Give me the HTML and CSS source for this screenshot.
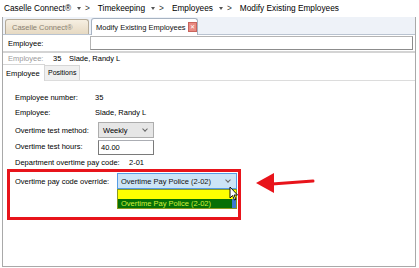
FILE: index.html
```html
<!DOCTYPE html>
<html lang="en">
<head>
    <meta charset="UTF-8">
    <title>Modify Existing Employees</title>
    <link rel="stylesheet" href="styles.css">
</head>
<body>
    <div class="crumbs">
        <span>Caselle Connect®</span><span class="sep"><i class="drop"></i>&gt;</span>
        <span>Timekeeping</span><span class="sep"><i class="drop"></i>&gt;</span>
        <span>Employees</span><span class="sep"><i class="drop"></i>&gt;</span>
        <span>Modify Existing Employees</span>
    </div>
    <div class="frame">
        <div class="tabs">
            <div class="tab">Caselle Connect®</div>
            <div class="tab active">Modify Existing Employees <span class="close">&#10005;</span></div>
        </div>
        <div class="lookup">
            <span class="lookup-label">Employee:</span>
            <div class="lookup-input"></div>
        </div>
        <div class="current">
            <span class="muted">Employee:</span>
            <span class="num">35</span>
            <span>Slade, Randy L</span>
        </div>
        <div class="subtabs">
            <div class="subtab active">Employee</div>
            <div class="subtab">Positions</div>
        </div>
        <div class="form">
            <div class="row"><span class="lbl">Employee number:</span><span>35</span></div>
            <div class="row"><span class="lbl">Employee:</span><span>Slade, Randy L</span></div>
            <div class="row r-method">
                <span class="lbl wide">Overtime test method:</span>
                <div class="select">Weekly<span class="chev"></span></div>
            </div>
            <div class="row r-hours">
                <span class="lbl wide">Overtime test hours:</span>
                <div class="input">40.00</div>
            </div>
            <div class="row r-dept"><span class="lbl dept">Department overtime pay code:</span><span>2-01</span></div>
            <div class="highlight">
                <span class="ovr">Overtime pay code override:</span>
                <div class="select open">Overtime Pay Police (2-02)<span class="chev"></span>
                    <div class="list">
                        <div class="opt blank"></div>
                        <div class="opt picked">Overtime Pay Police (2-02)</div>
                    </div>
                    <svg class="cursor" width="10" height="15" viewBox="0 0 10 15">
                        <path d="M1 1 L1 12 L3.5 9.5 L5.5 14 L7 13.3 L5 9 L8.5 9 Z" fill="#fff" stroke="#000" stroke-width="0.9"/>
                    </svg>
                </div>
            </div>
        </div>
        <svg class="arrow" width="70" height="24" viewBox="0 0 70 24">
            <path d="M16 13 L57 10" stroke="#e8141b" stroke-width="3" stroke-linecap="round"/>
            <path d="M0 12 L18 2 L18 22 Z" fill="#e8141b"/>
        </svg>
    </div>
</body>
</html>
```

FILE: styles.css
```css
* {
    margin: 0;
    padding: 0;
    box-sizing: border-box;
}

body {
    font-family: "Liberation Sans", Arial, sans-serif;
    font-size: 7.5px;
    color: #000;
    background: #fff;
    width: 419px;
    height: 268px;
    overflow: hidden;
}

/* breadcrumb bar */
.crumbs {
    display: flex;
    align-items: center;
    height: 17px;
    padding: 0 0 1px 4px;
    font-size: 8.3px;
    white-space: nowrap;
}

.crumbs .sep {
    display: flex;
    align-items: center;
    gap: 4px;
    margin: 0 8px 0 6px;
    color: #333;
}

.drop {
    width: 0;
    height: 0;
    border-left: 2.5px solid transparent;
    border-right: 2.5px solid transparent;
    border-top: 3px solid #555;
}

.frame {
    position: relative;
    margin: 0 3px 0 2px;
    height: 250px;
    border: 1px solid #a9a9a9;
    border-top: 0;
}

/* document tabs */
.tabs {
    display: flex;
    align-items: flex-end;
    gap: 2px;
    height: 18px;
    padding-left: 2px;
    background: #eef2f8;
    border-bottom: 1px solid #b9c3d0;
}

.tab {
    width: 84px;
    height: 15px;
    padding: 3px 0 0 6px;
    border: 1px solid #b5ab99;
    border-bottom: 0;
    border-radius: 3px 3px 0 0;
    background: linear-gradient(#f6efe2, #e6d9c2);
    color: #8a8272;
    white-space: nowrap;
}

.tab.active {
    display: flex;
    align-items: center;
    width: 107px;
    height: 17px;
    margin-bottom: -1px;
    padding: 0 0 0 4px;
    background: #fff;
    color: #111;
    border-color: #a7b3c2;
}

.close {
    width: 10px;
    height: 10px;
    margin-left: 2px;
    background: #e98a82;
    border: 1px solid #c9645c;
    color: #fff;
    font-size: 6px;
    line-height: 8px;
    text-align: center;
}

.lookup {
    display: flex;
    align-items: center;
    height: 18px;
    padding-left: 5px;
    border-bottom: 2px solid #d4d4d4;
}

.lookup-label {
    width: 82px;
}

.lookup-input {
    width: 323px;
    height: 14px;
    border: 1px solid #b4b4b4;
    border-right-color: #8c8c8c;
    border-bottom-color: #8c8c8c;
}

.current {
    display: flex;
    align-items: center;
    height: 10px;
    padding-left: 5px;
}

.muted {
    width: 45px;
    color: #9a9a9a;
}

.num {
    width: 16px;
}

/* inner tabs */
.subtabs {
    display: flex;
    align-items: flex-end;
    height: 18px;
    border-bottom: 1px solid #dcdcdc;
}

.subtab {
    height: 15px;
    padding: 3px 3px 0;
    border: 1px solid #d6d6d6;
    border-bottom: 0;
    border-left: 0;
    background: #f0f0f0;
    font-size: 7px;
}

.subtab.active {
    width: 42px;
    height: 17px;
    margin-bottom: -1px;
    padding-top: 4px;
    border-left: 0;
    background: #fff;
    font-size: 7.6px;
}

.form {
    padding: 9px 0 0 12px;
}

.row {
    display: flex;
    align-items: center;
    height: 15px;
}

.lbl {
    width: 80px;
}

.lbl.wide {
    width: 83px;
}

.r-method {
    height: 16px;
    margin-top: 2px;
}

.r-hours {
    height: 17px;
}

.select {
    position: relative;
    width: 56px;
    height: 16px;
    padding: 0 0 0 4px;
    display: flex;
    align-items: center;
    background: #e6e6e6;
    border: 1px solid #adadad;
}

.chev {
    position: absolute;
    right: 6px;
    top: 4px;
    width: 4px;
    height: 4px;
    border-right: 1px solid #666;
    border-bottom: 1px solid #666;
    transform: rotate(45deg);
}

.input {
    width: 56px;
    height: 15px;
    margin-top: 1px;
    padding-left: 2px;
    display: flex;
    align-items: center;
    border: 1px solid #7a7a7a;
    border-top-color: #abadb3;
}

.r-dept {
    height: 14px;
}

.lbl.dept {
    width: 114px;
}

/* annotation box */
.highlight {
    display: flex;
    align-items: flex-start;
    width: 234px;
    height: 51px;
    margin-left: -8px;
    padding: 1px 0 0 5px;
    border: 3px solid #e8141b;
}

.ovr {
    width: 102px;
    height: 16px;
    display: flex;
    align-items: center;
}

.select.open {
    width: 120px;
    padding-left: 3px;
    background: #cce4f7;
    border-color: #569de5;
    color: #111;
}

.list {
    position: absolute;
    left: -1px;
    top: 15px;
    width: 120px;
    border: 1px solid #8a9a1e;
}

.opt {
    height: 9px;
}

.opt.blank {
    background: #ffff00;
}

.opt.picked {
    display: flex;
    align-items: center;
    height: 9px;
    padding-left: 3px;
    background: #067006;
    border-right: 4px solid #3c7ad0;
    color: #d4f03c;
}

.cursor {
    position: absolute;
    left: 111px;
    top: 12px;
}

.arrow {
    position: absolute;
    left: 253px;
    top: 154px;
}
```
